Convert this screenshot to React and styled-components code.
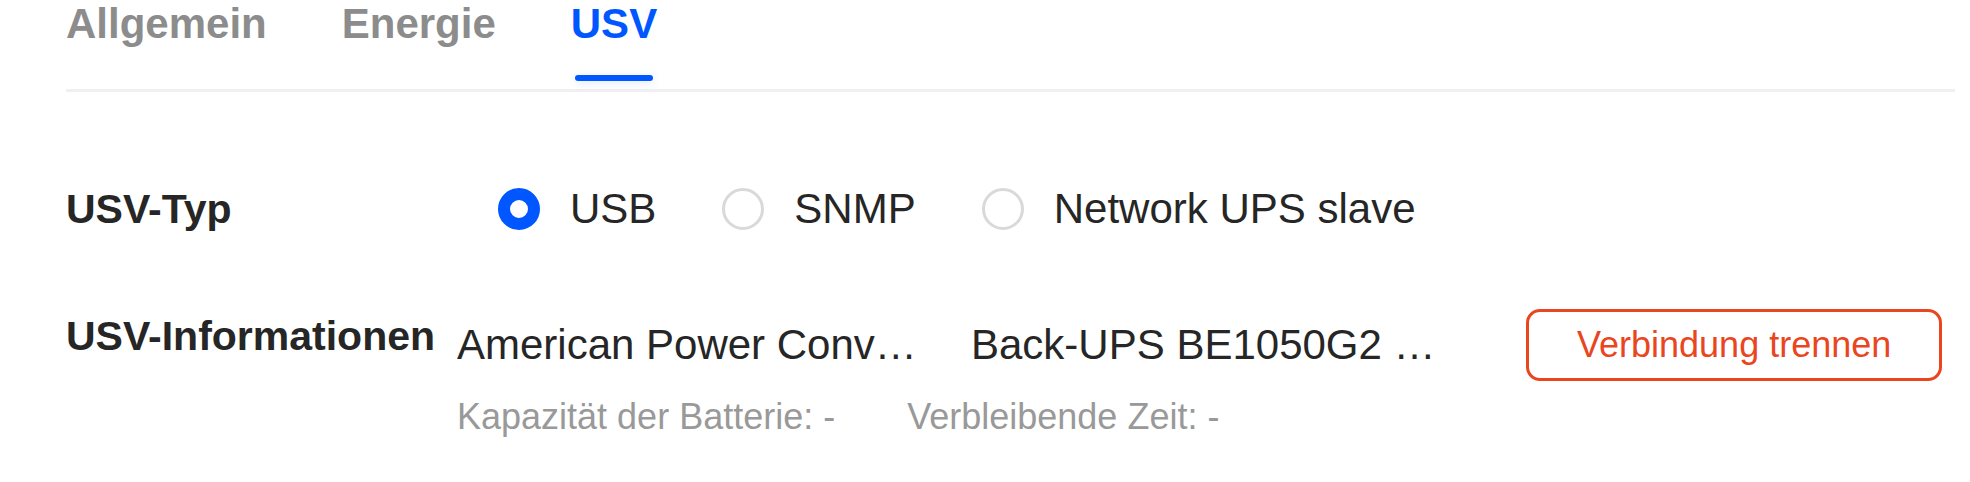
import React, { useState } from "react";
import styled, { createGlobalStyle } from "styled-components";

const BLUE = "#0057ff";
const RED = "#e9461f";
const TEXT = "#262626";

const GlobalStyle = createGlobalStyle`
  html, body {
    margin: 0;
    padding: 0;
    background: #ffffff;
  }
  body {
    font-family: "Liberation Sans", Arial, Helvetica, sans-serif;
    -webkit-font-smoothing: antialiased;
  }
`;

const Page = styled.div`
  padding: 0 15px 0 66px;
  font-family: "Liberation Sans", Arial, Helvetica, sans-serif;
`;

const TabBar = styled.nav`
  display: flex;
  gap: 75px;
  border-bottom: 3px solid #f0f0f0;
`;

const Tab = styled.div`
  display: flex;
  flex-direction: column;
  align-items: center;
  padding-bottom: 8px;
  cursor: pointer;
`;

const TabLabel = styled.span`
  font-size: 42px;
  font-weight: 700;
  line-height: 48px;
  white-space: nowrap;
  color: ${(p) => (p.$active ? BLUE : "#8c8c8c")};
`;

const TabIndicator = styled.span`
  margin-top: 27px;
  height: 6px;
  width: calc(100% - 8px);
  border-radius: 3px;
  background: ${(p) => (p.$active ? BLUE : "transparent")};
  box-shadow: ${(p) => (p.$active ? "0 2px 10px rgba(0, 87, 255, 0.14)" : "none")};
`;

const Form = styled.div`
  padding-top: 93px;
  display: flex;
  flex-direction: column;
  gap: 76px;
`;

const FieldRow = styled.div`
  display: flex;
  align-items: ${(p) => p.$align || "center"};
`;

const Label = styled.div`
  flex: 0 0 ${(p) => p.$width}px;
  padding-top: ${(p) => p.$offset || 0}px;
  font-size: 41px;
  font-weight: 700;
  line-height: 48px;
  color: ${TEXT};
  white-space: nowrap;
`;

const RadioGroup = styled.div`
  display: flex;
  align-items: center;
  gap: 66px;
`;

const RadioOption = styled.label`
  display: flex;
  align-items: center;
  gap: 30px;
  font-size: 42px;
  line-height: 48px;
  color: ${TEXT};
  cursor: pointer;
  white-space: nowrap;
`;

const RadioCircle = styled.span`
  box-sizing: border-box;
  flex: 0 0 42px;
  width: 42px;
  height: 42px;
  border-radius: 50%;
  background: #ffffff;
  border: ${(p) => (p.$checked ? `12px solid ${BLUE}` : "3px solid #d9d9d9")};
`;

const InfoColumn = styled.div`
  display: flex;
  flex-direction: column;
  gap: 15px;
`;

const InfoLine = styled.div`
  display: flex;
  align-items: center;
`;

const Value = styled.div`
  flex: 0 0 ${(p) => p.$width}px;
  font-size: 42px;
  line-height: 48px;
  color: ${TEXT};
  white-space: nowrap;
  overflow: hidden;
  text-overflow: ellipsis;
`;

const DangerButton = styled.button`
  box-sizing: border-box;
  height: 72px;
  padding: 0 48px;
  border: 3px solid ${RED};
  border-radius: 14px;
  background: #ffffff;
  color: ${RED};
  font-family: "Liberation Sans", Arial, Helvetica, sans-serif;
  font-size: 36px;
  line-height: 66px;
  white-space: nowrap;
  cursor: pointer;
`;

const SubLine = styled.div`
  display: flex;
  gap: 72px;
  font-size: 36px;
  line-height: 42px;
  color: #999999;
  white-space: nowrap;
`;

const tabs = ["Allgemein", "Energie", "USV"];
const upsTypes = ["USB", "SNMP", "Network UPS slave"];

export default function App() {
  const [activeTab, setActiveTab] = useState("USV");
  const [upsType, setUpsType] = useState("USB");

  return (
    <>
      <GlobalStyle />
      <Page>
        <TabBar>
          {tabs.map((t) => (
            <Tab key={t} onClick={() => setActiveTab(t)}>
              <TabLabel $active={t === activeTab}>{t}</TabLabel>
              <TabIndicator $active={t === activeTab} />
            </Tab>
          ))}
        </TabBar>

        <Form>
          <FieldRow>
            <Label $width={432}>USV-Typ</Label>
            <RadioGroup>
              {upsTypes.map((u) => (
                <RadioOption key={u} onClick={() => setUpsType(u)}>
                  <RadioCircle $checked={u === upsType} />
                  {u}
                </RadioOption>
              ))}
            </RadioGroup>
          </FieldRow>

          <FieldRow $align="flex-start">
            <Label $width={391} $offset={3}>
              USV-Informationen
            </Label>
            <InfoColumn>
              <InfoLine>
                <Value $width={514}>American Power Conv…</Value>
                <Value $width={555}>Back-UPS BE1050G2 …</Value>
                <DangerButton>Verbindung trennen</DangerButton>
              </InfoLine>
              <SubLine>
                <span>Kapazität der Batterie: -</span>
                <span>Verbleibende Zeit: -</span>
              </SubLine>
            </InfoColumn>
          </FieldRow>
        </Form>
      </Page>
    </>
  );
}
